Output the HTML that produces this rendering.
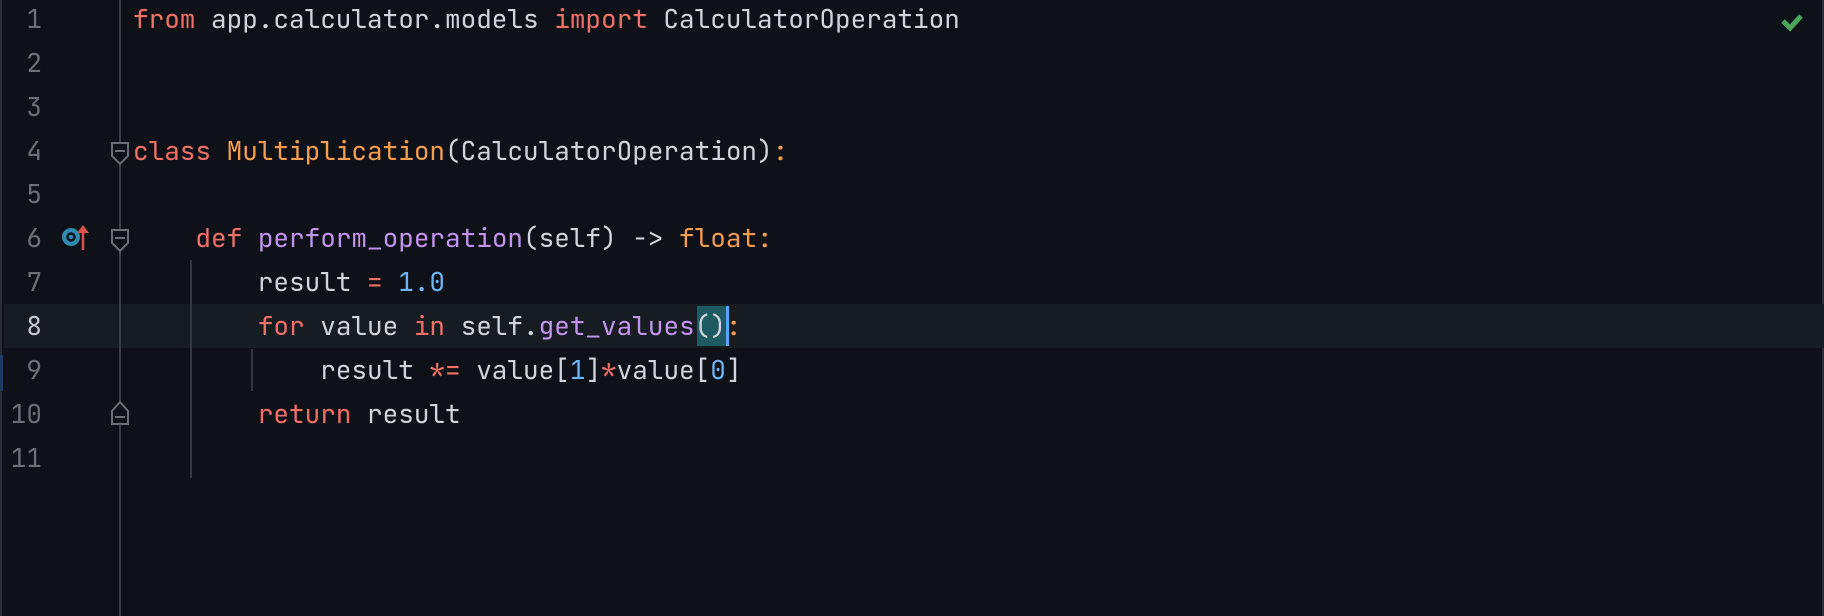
<!DOCTYPE html>
<html><head><style>
body{margin:0;width:1824px;height:616px;background:#0e1117;overflow:hidden;position:relative;font-family:"JetBrains Mono","Liberation Mono",monospace;font-size:26px;font-variant-ligatures:none;font-feature-settings:"liga" 0,"calt" 0;}
.ln{position:absolute;left:0;width:42px;text-align:right;color:#6b7078;}
.code{position:absolute;left:133px;white-space:pre;color:#d1d5da;}
.k{color:#f47067}.c{color:#f69d50}.f{color:#c393f0}.n{color:#6cb6ff}
</style></head><body>
<div style="position:absolute;left:0;top:0;width:2px;height:616px;background:#2a2d33"></div>
<div style="position:absolute;right:0;top:0;width:2px;height:616px;background:#2a2d33"></div>
<div style="position:absolute;left:4px;right:0;top:304px;height:44px;background:#171b22"></div>
<div style="position:absolute;left:0;top:355px;width:3px;height:36px;background:#1d3a66"></div>
<div style="position:absolute;left:119px;top:0;width:2px;height:616px;background:#3a3d42"></div>
<div style="position:absolute;left:190px;top:260px;width:2px;height:218px;background:#33363b"></div>
<div style="position:absolute;left:251px;top:349px;width:2px;height:42px;background:#33363b"></div>
<svg width="1824" height="616" style="position:absolute;left:0;top:0">
<g fill="#0e1117" stroke="#6b6e73" stroke-width="2">
<path d="M112 143 H128 V156 L120 164 L112 156 Z"/><path d="M115 151 H125"/>
<path d="M112 230 H128 V243 L120 251 L112 243 Z"/><path d="M115 238 H125"/>
<path d="M112 411 L120 402 L128 411 V424 H112 Z"/><path d="M115 417 H125"/>
</g>
<circle cx="71" cy="237" r="9" fill="#2e8bb0"/><circle cx="71" cy="237" r="3.5" fill="none" stroke="#0e1117" stroke-width="2.5"/>
<path d="M83 250 V228" stroke="#d9544a" stroke-width="2.5"/><path d="M77 233 L83 225 L89 233 Z" fill="#d9544a"/>
<path d="M1783 21 L1790 28 L1801 16" stroke="#4ca65a" stroke-width="5" fill="none"/>
</svg>
<div style="position:absolute;left:697px;top:306px;width:30px;height:40px;background:#1d5a62"></div>
<div style="position:absolute;left:726px;top:306px;width:3px;height:40px;background:#58a6ff"></div>
<div id="g"></div>
<script>
var lines=[
'<span class="k">from</span> app.calculator.models <span class="k">import</span> CalculatorOperation',
'','',
'<span class="k">class</span> <span class="c">Multiplication</span>(CalculatorOperation)<span class="c">:</span>',
'',
'    <span class="k">def</span> <span class="f">perform_operation</span>(self) -&gt; <span class="c">float:</span>',
'        result <span class="k">=</span> <span class="n">1.0</span>',
'        <span class="k">for</span> value <span class="k">in</span> self.<span class="f">get_values</span>()<span class="c">:</span>',
'            result <span class="k">*=</span> value[<span class="n">1</span>]<span class="k">*</span>value[<span class="n">0</span>]',
'        <span class="k">return</span> result',
''];
var h='';
for(var i=0;i<11;i++){var t=-3+i*43.85;
h+='<div class="ln" style="top:'+t+'px;line-height:44px;'+(i==7?'color:#c5c8cc':'')+'">'+(i+1)+'</div>';
h+='<div class="code" style="top:'+t+'px;line-height:44px">'+lines[i]+'</div>';}
document.getElementById('g').innerHTML=h;
</script>
</body></html>
